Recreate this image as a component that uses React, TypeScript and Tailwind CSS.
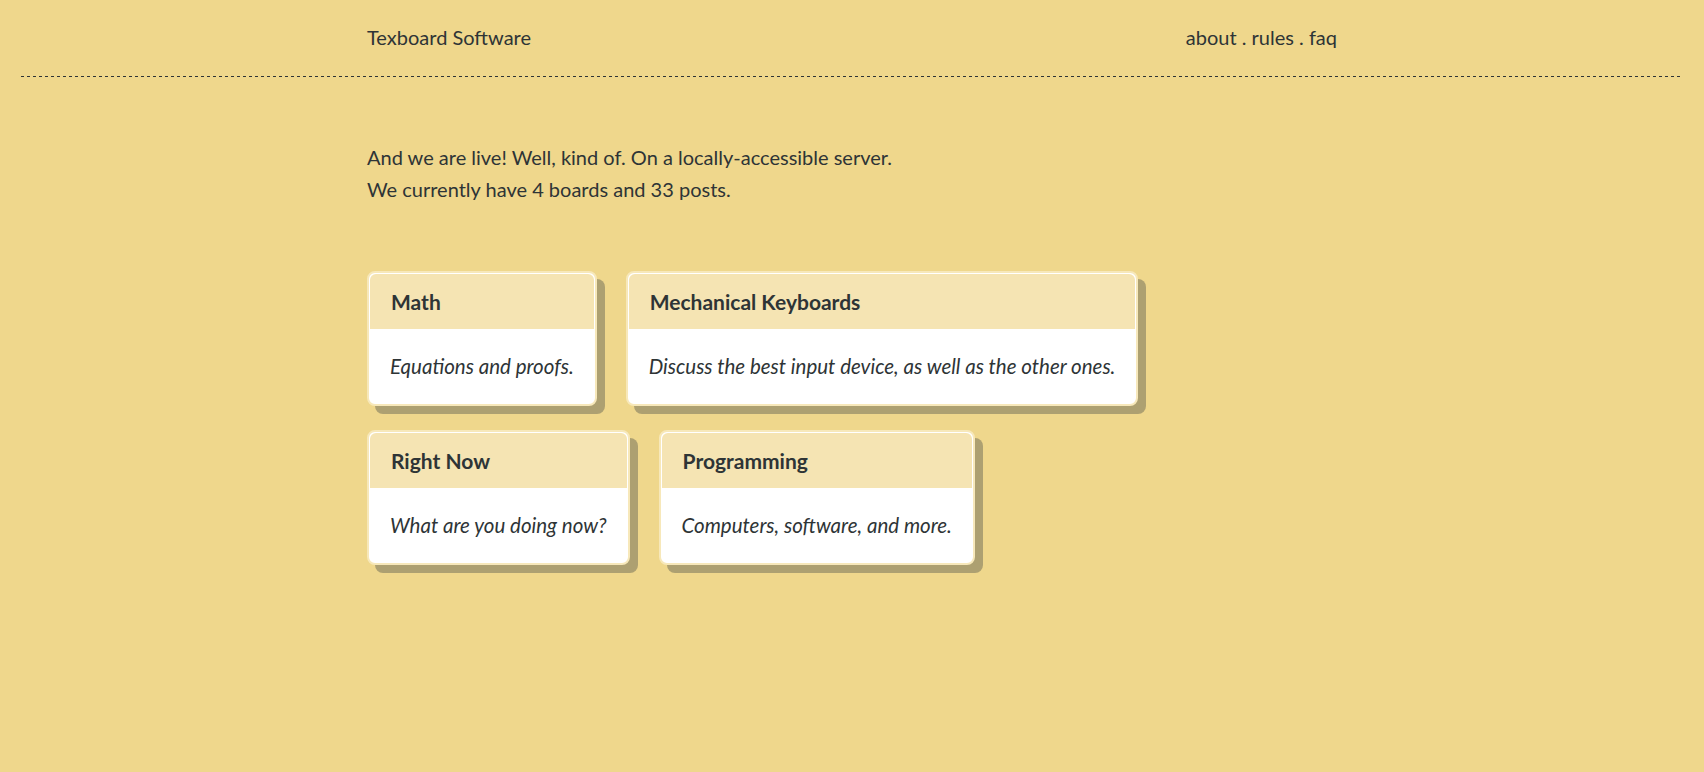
const boards = [
  [
    { name: 'Math', blurb: 'Equations and proofs.' },
    { name: 'Mechanical Keyboards', blurb: 'Discuss the best input device, as well as the other ones.' },
  ],
  [
    { name: 'Right Now', blurb: 'What are you doing now?' },
    { name: 'Programming', blurb: 'Computers, software, and more.' },
  ],
]

function BoardCard({ name, blurb }: { name: string; blurb: string }) {
  return (
    <a
      href="#"
      className="block rounded-[8px] border-2 border-[#f7e8ba] bg-white p-px shadow-[8px_8px_0_#ada071]"
    >
      <div className="flex h-[55px] items-center rounded-t-[6px] bg-[#f5e4b3] px-[21px] text-[21px] font-bold">
        {name}
      </div>
      <div className="flex h-[74px] items-center px-5 text-[20.5px] italic">{blurb}</div>
    </a>
  )
}

export default function App() {
  return (
    <div
      className="min-h-screen bg-[#efd78c] text-[#2e3436]"
      style={{ fontFamily: 'Lato, "Noto Sans", sans-serif' }}
    >
      <header className="pt-[21px]">
        <div className="mx-auto flex w-[970px] items-center justify-between text-[20px] leading-[32px]">
          <a href="#">Texboard Software</a>
          <nav>
            <a href="#">about</a> . <a href="#">rules</a> . <a href="#">faq</a>
          </nav>
        </div>
        {/* dashed rule: 3px dash, 3px gap */}
        <div className="mx-[21px] mt-[23px] h-px bg-[linear-gradient(to_right,#2e3436_50%,transparent_50%)] bg-[length:6px_1px] bg-repeat-x" />
      </header>

      <main className="mx-auto w-[970px] pt-[64px]">
        <p className="text-[20px] leading-[32px]">
          And we are live! Well, kind of. On a locally-accessible server.
          <br />
          We currently have 4 boards and 33 posts.
        </p>

        <div className="mt-[66px] flex flex-col gap-[24px]">
          {boards.map((row, i) => (
            <div key={i} className="flex gap-[29px]">
              {row.map((b) => (
                <BoardCard key={b.name} {...b} />
              ))}
            </div>
          ))}
        </div>
      </main>
    </div>
  )
}
